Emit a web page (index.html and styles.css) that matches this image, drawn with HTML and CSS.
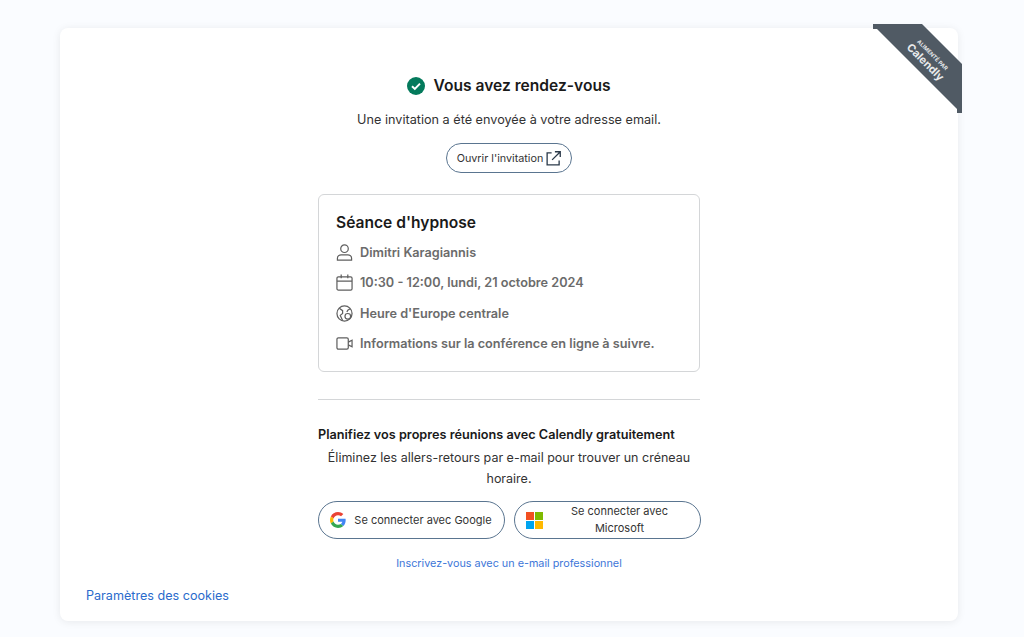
FILE: index.html
```html
<!DOCTYPE html>
<html lang="fr">
<head>
    <meta charset="UTF-8">
    <title>Vous avez rendez-vous - Calendly</title>
    <link rel="stylesheet" href="styles.css">
</head>

<body>
    <main class="card">
        <!-- Corner ribbon -->
        <div class="ribbon">
            <svg class="ribbon-shape" width="90" height="90" viewBox="0 0 90 90">
                <polygon points="0,0 49,0 89,40 89,89 84,89 84,85 4,5 0,5" fill="#505a64"/>
            </svg>
            <div class="ribbon-text">
                <span class="ribbon-small">ALIMENTÉ PAR</span>
                <span class="ribbon-brand">Calendly</span>
            </div>
        </div>

        <section class="column">
            <h1 class="title">
                <svg width="18" height="18" viewBox="0 0 18 18">
                    <circle cx="9" cy="9" r="9" fill="#047a5c"/>
                    <path d="M5 9.300l2.800 2.600L13 6.600" fill="none" stroke="#fff" stroke-width="2"/>
                </svg>
                Vous avez rendez-vous
            </h1>
            <p class="subtitle">Une invitation a été envoyée à votre adresse email.</p>
            <a class="open-btn" href="#">
                Ouvrir l'invitation
                <svg width="15" height="15" viewBox="0 0 16 16" fill="none" stroke="#2b3a4a" stroke-width="1.400">
                    <path d="M6 2H1.200v12.800H14V10"/>
                    <path d="M6.500 9.500L15 1M9.500 .8H15.200V6.500"/>
                </svg>
            </a>

            <!-- Event details -->
            <div class="event">
                <h2>Séance d'hypnose</h2>
                <div class="event-row">
                    <svg width="17" height="17" viewBox="0 0 18 18" fill="none" stroke="#5f5f5f" stroke-width="1.300">
                        <circle cx="9" cy="5" r="4"/>
                        <path d="M1.500 17v-2c0-2 2-3.500 4-3.500h7c2 0 4 1.500 4 3.500v2z"/>
                    </svg>
                    Dimitri Karagiannis
                </div>
                <div class="event-row">
                    <svg width="17" height="17" viewBox="0 0 18 18" fill="none" stroke="#5f5f5f" stroke-width="1.300">
                        <rect x="1" y="3" width="16" height="14" rx="1.500"/>
                        <path d="M1 7.500h16M5.500 .5v4M12.500 .5v4"/>
                    </svg>
                    10:30 - 12:00, lundi, 21 octobre 2024
                </div>
                <div class="event-row">
                    <svg width="17" height="17" viewBox="0 0 18 18" fill="none" stroke="#5f5f5f" stroke-width="1.300">
                        <circle cx="9" cy="9" r="8"/>
                        <path d="M3.500 3.500l3.500 2.500v3L4.500 11l2.500 5.500M15 4l-2.500 1.500-1 2"/>
                        <circle cx="12.500" cy="12" r="3"/>
                    </svg>
                    Heure d'Europe centrale
                </div>
                <div class="event-row">
                    <svg width="17" height="17" viewBox="0 0 18 18" fill="none" stroke="#5f5f5f" stroke-width="1.300">
                        <rect x="1" y="3" width="12" height="12" rx="1.500"/>
                        <path d="M13 7.500l4-2v7l-4-2"/>
                    </svg>
                    Informations sur la conférence en ligne à suivre.
                </div>
            </div>

            <hr class="divider">

            <!-- Signup -->
            <h3 class="promo-title">Planifiez vos propres réunions avec Calendly gratuitement</h3>
            <p class="promo-text">Éliminez les allers-retours par e-mail pour trouver un créneau horaire.</p>
            <div class="signup-btns">
                <a class="signup-btn" href="#">
                    <svg width="16" height="16" viewBox="0 0 48 48">
                        <path fill="#ea4335" d="M24 9.500c3.500 0 6.700 1.200 9.200 3.600l6.900-6.900C35.900 2.400 30.500 0 24 0 14.600 0 6.500 5.400 2.600 13.200l8 6.200C12.500 13.700 17.800 9.500 24 9.500z"/>
                        <path fill="#4285f4" d="M47 24.500c0-1.600-.1-3.100-.4-4.500H24v9h13c-.6 3-2.300 5.500-4.800 7.200l7.700 6C44.400 38 47 31.800 47 24.500z"/>
                        <path fill="#fbbc05" d="M10.500 28.600C10 27.200 9.800 25.600 9.800 24s.2-3.200.7-4.600l-8-6.200C.9 16.400 0 20.100 0 24s.9 7.600 2.600 10.800l7.900-6.200z"/>
                        <path fill="#34a853" d="M24 48c6.500 0 11.900-2.100 15.900-5.800l-7.700-6c-2.200 1.400-4.900 2.300-8.200 2.300-6.200 0-11.500-4.200-13.400-9.900l-8 6.200C6.500 42.600 14.600 48 24 48z"/>
                    </svg>
                    <span class="signup-label">Se connecter avec Google</span>
                </a>
                <a class="signup-btn" href="#">
                    <svg width="17" height="17" viewBox="0 0 17 17">
                        <rect width="8" height="8" fill="#f25022"/>
                        <rect x="9" width="8" height="8" fill="#7fba00"/>
                        <rect y="9" width="8" height="8" fill="#00a4ef"/>
                        <rect x="9" y="9" width="8" height="8" fill="#ffb900"/>
                    </svg>
                    <span class="signup-label">Se connecter avec Microsoft</span>
                </a>
            </div>
            <a class="email-link" href="#">Inscrivez-vous avec un e-mail professionnel</a>
        </section>

        <a class="cookies" href="#">Paramètres des cookies</a>
    </main>
</body>
</html>
```

FILE: styles.css
```css
html, body {
    height: 100%;
}

body {
    margin: 0;
    padding: 28px 66px 16px 60px;
    box-sizing: border-box;
    background-color: #fafcff;
    font-family: Inter, Lato, sans-serif;
    color: #1a1a1a;
    overflow: hidden;
}

a {
    text-decoration: none;
}

.card {
    position: relative;
    height: 593px;
    box-sizing: border-box;
    padding-top: 47px;
    background-color: #fff;
    border-radius: 8px;
    box-shadow: 0 1px 8px rgba(0, 0, 0, 0.08);
}

.ribbon {
    position: absolute;
    top: -4px;
    right: -5px;
    width: 90px;
    height: 90px;
    overflow: hidden;
}

.ribbon-shape {
    display: block;
}

.ribbon-text {
    position: absolute;
    top: 25px;
    left: 10px;
    width: 90px;
    display: flex;
    flex-direction: column;
    align-items: center;
    color: #e8eaec;
    transform: rotate(45deg);
}

.ribbon-small {
    font-size: 5.500px;
    font-weight: 700;
    line-height: 8px;
}

.ribbon-brand {
    font-size: 11px;
    font-weight: 700;
    line-height: 13px;
}

.column {
    width: 382px;
    margin: 0 auto;
    display: flex;
    flex-direction: column;
    align-items: center;
}

.title {
    display: flex;
    align-items: center;
    gap: 8px;
    margin: 0;
    font-size: 15.600px;
    line-height: 22px;
    font-weight: 600;
}

.subtitle {
    margin: 12px 0 0;
    font-size: 12.670px;
    line-height: 21px;
    color: #333;
}

.open-btn {
    display: flex;
    align-items: center;
    gap: 3px;
    height: 28px;
    margin-top: 13px;
    padding: 0 10px;
    border: 1px solid #5a7590;
    border-radius: 16px;
    font-size: 10.800px;
    color: #333;
}

.event {
    width: 100%;
    box-sizing: border-box;
    margin-top: 21px;
    padding: 17px 17px 12px;
    border: 1px solid #d4d6d8;
    border-radius: 6px;
}

.event h2 {
    margin: 0 0 3px;
    font-size: 15.600px;
    line-height: 22px;
    font-weight: 600;
}

.event-row {
    display: flex;
    align-items: center;
    gap: 7px;
    height: 30.500px;
    font-size: 12.700px;
    font-weight: 600;
    color: #6b6b6b;
}

.divider {
    width: 100%;
    margin: 27px 0 0;
    border: 0;
    border-top: 1px solid #d4d6d8;
}

.promo-title {
    align-self: flex-start;
    margin: 26px 0 0;
    font-size: 12.700px;
    line-height: 18px;
    font-weight: 600;
}

.promo-text {
    margin: 3px 0 0;
    padding: 0 8px;
    font-size: 12.500px;
    line-height: 21px;
    text-align: center;
    color: #333;
}

.signup-btns {
    display: flex;
    gap: 9px;
    margin-top: 12px;
}

.signup-btn {
    display: flex;
    align-items: center;
    gap: 5px;
    width: 187px;
    height: 38px;
    box-sizing: border-box;
    padding: 0 8px 0 11px;
    border: 1px solid #5a7590;
    border-radius: 20px;
    font-size: 11px;
    line-height: 17px;
    color: #333;
}

.signup-label {
    flex: 1;
    text-align: center;
}

.email-link {
    margin-top: 16px;
    font-size: 10.800px;
    line-height: 18px;
    color: #3d76d8;
}

.cookies {
    position: absolute;
    left: 26px;
    bottom: 18px;
    font-size: 12.600px;
    color: #2a6bcc;
}
```
